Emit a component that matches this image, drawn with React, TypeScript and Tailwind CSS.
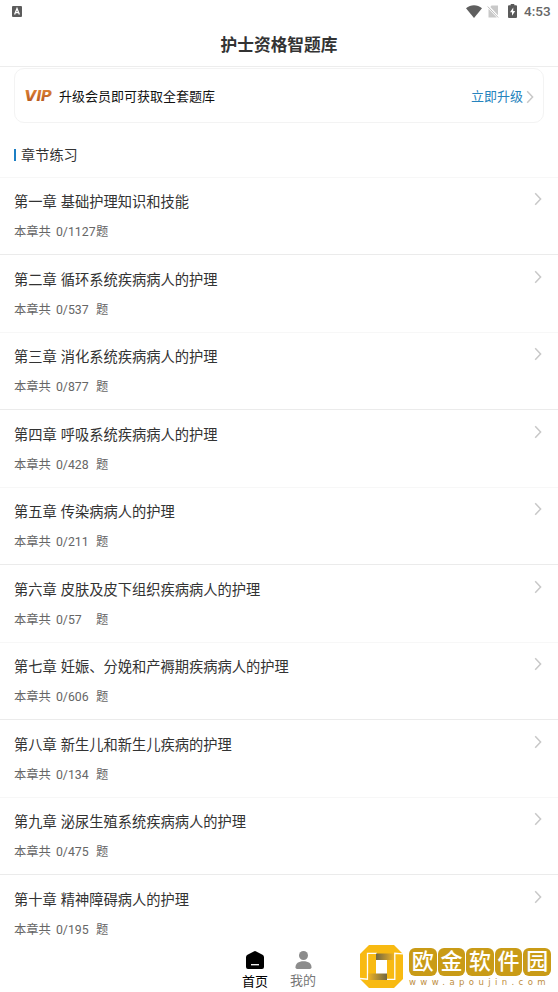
import clsx from 'clsx';

interface Chapter {
  id: number;
  title: string;
  done: number;
  total: number;
}

const chapters: Chapter[] = [
  { id: 1, title: '第一章 基础护理知识和技能', done: 0, total: 1127 },
  { id: 2, title: '第二章 循环系统疾病病人的护理', done: 0, total: 537 },
  { id: 3, title: '第三章 消化系统疾病病人的护理', done: 0, total: 877 },
  { id: 4, title: '第四章 呼吸系统疾病病人的护理', done: 0, total: 428 },
  { id: 5, title: '第五章 传染病病人的护理', done: 0, total: 211 },
  { id: 6, title: '第六章 皮肤及皮下组织疾病病人的护理', done: 0, total: 57 },
  { id: 7, title: '第七章 妊娠、分娩和产褥期疾病病人的护理', done: 0, total: 606 },
  { id: 8, title: '第八章 新生儿和新生儿疾病的护理', done: 0, total: 134 },
  { id: 9, title: '第九章 泌尿生殖系统疾病病人的护理', done: 0, total: 475 },
  { id: 10, title: '第十章 精神障碍病人的护理', done: 0, total: 195 },
];

const Chevron = ({ className }: { className?: string }) => (
  <svg viewBox="0 0 8 14" fill="none" className={clsx('h-3.5 w-2', className)}>
    <path d="M1.2 1.2 6.6 7l-5.4 5.8" stroke="#c8c8c8" strokeWidth="1.5" />
  </svg>
);

const StatusBar = () => (
  <div className="flex h-[22px] items-center justify-between pr-[7px] pl-3">
    <svg viewBox="0 0 10 11" className="h-[11px] w-2.5">
      <rect width="10" height="11" rx="1" fill="#5c5c5c" />
      <path d="M2.6 8.5 5 2.6l2.4 5.9M3.5 6.7h3" stroke="#fff" strokeWidth="1.3" fill="none" />
    </svg>
    <div className="flex items-center">
      <svg viewBox="0 0 16 13" className="h-[13px] w-4">
        <path d="M0 3.2C4.6-.7 11.4-.7 16 3.2L8 13z" fill="#5f5f5f" />
      </svg>
      <svg viewBox="0 0 12 13" className="ml-[5px] h-[13px] w-3">
        <path d="M4.5.5H11v9.8L3.300 2zM1.500 3.800 9.800 12.500H1.500z" fill="#c9c9c9" />
        <path d="m.7 1.500 10.500 11" stroke="#c0c0c0" strokeWidth="1" />
      </svg>
      <svg viewBox="0 0 9 14" className="ml-[9px] h-3.5 w-[9px]">
        <path
          d="M2.700 0h3.600v1.300H8a1 1 0 0 1 1 1V13a1 1 0 0 1-1 1H1a1 1 0 0 1-1-1V2.300a1 1 0 0 1 1-1h1.700z"
          fill="#5a5a5a"
        />
        <path d="M5.300 3.500 2 8.200h2v3.500L7.200 7h-2z" fill="#fff" />
      </svg>
      <span className="mt-px ml-[7px] w-[27px] font-[family-name:Roboto] text-[13.5px] leading-none font-medium text-[#666]">
        4:53
      </span>
    </div>
  </div>
);

const VipCard = () => (
  <div className="mx-3.5 mt-px flex h-[55px] items-center rounded-[10px] border border-[#f3f3f3] pt-0.5 pr-2 pl-[9px]">
    <svg viewBox="0 0 28 18" className="-mt-0.5 h-[18px] w-7 overflow-visible">
      <defs>
        <linearGradient id="vip" x1="0" y1="0" x2="0" y2="1">
          <stop offset="0" stopColor="#e58a3c" />
          <stop offset="1" stopColor="#b0521a" />
        </linearGradient>
      </defs>
      <text
        x="0"
        y="14"
        textLength="27.5"
        lengthAdjust="spacingAndGlyphs"
        fill="url(#vip)"
        className="font-[family-name:Inter] text-[14.5px] font-extrabold italic"
      >
        VIP
      </text>
    </svg>
    <span className="ml-[7px] text-[13px] text-[#111]">升级会员即可获取全套题库</span>
    <span className="ml-auto text-[13px] text-[#2583bd]">立即升级</span>
    <Chevron className="mr-px ml-[3px]" />
  </div>
);

const ChapterRow = ({ chapter }: { chapter: Chapter }) => (
  <li
    className={clsx(
      'flex h-[77.5px] shrink-0 items-start justify-between border-t pr-4 pl-3.5',
      chapter.id % 2 ? 'border-[#f7f7f7]' : 'border-[#ebebeb]',
    )}
  >
    <div className="flex flex-col">
      <span className="mt-[14.5px] text-[14.25px] leading-5 text-[#333]">{chapter.title}</span>
      <span className="mt-[11px] flex text-[12.3px] leading-[18px] text-[#666]">
        本章共
        <span className="ml-[5px] w-10 font-[family-name:Roboto]">
          {chapter.done}/{chapter.total}
        </span>
        题
      </span>
    </div>
    <Chevron className="mt-[14.5px]" />
  </li>
);

const TabBar = () => (
  <nav className="absolute inset-x-0 bottom-0 flex h-12 justify-center gap-[21px] bg-white">
    <div className="flex w-[27px] flex-col items-center text-[13px] whitespace-nowrap text-black">
      <svg viewBox="0 0 18 18" className="mt-[7px] h-[18px] w-[18px]">
        <path d="M7.8.4q1.2-.6 2.400 0l6.300 3.400q1.500.8 1.500 2.400V16q0 2-2 2H2q-2 0-2-2V6.200q0-1.600 1.500-2.400z" />
        <path d="M5 13.700h8" stroke="#fff" strokeWidth="1.3" />
      </svg>
      <span className="mt-1 leading-[18px]">首页</span>
    </div>
    <div className="flex w-[27px] flex-col items-center text-[13px] whitespace-nowrap text-[#777]">
      <svg viewBox="0 0 17 18" className="mt-[7px] h-[18px] w-[17px]" fill="#8c8c8c">
        <circle cx="8.5" cy="4.5" r="4.5" />
        <path d="M.5 16.200C.5 12.500 3.500 10.200 8.500 10.200s8 2.300 8 6q0 1.800-1.600 1.800H2.100Q.5 18 .5 16.200z" />
      </svg>
      <span className="mt-[3px] leading-[18px]">我的</span>
    </div>
  </nav>
);

const SiteMark = () => (
  <div className="absolute right-[7px] bottom-1 flex items-end gap-1.5">
    <svg viewBox="0 0 43 43" className="h-[43px] w-[43px]">
      <defs>
        <linearGradient id="foldTop" x1="0" y1="0" x2="1" y2="0">
          <stop offset="0" stopColor="#6f6644" />
          <stop offset="1" stopColor="#eeb223" />
        </linearGradient>
        <linearGradient id="foldBottom" x1="0" y1="0" x2="1" y2="0">
          <stop offset="0" stopColor="#eeb223" />
          <stop offset="1" stopColor="#6f6644" />
        </linearGradient>
      </defs>
      <path d="M9 0h25l9 9v25l-9 9H9l-9-9V9z" fill="#f8ba12" />
      <path d="M16 14.500h11V29H16z" fill="#fff" />
      {/* hooks running off the two ends of the ring */}
      <path d="M0 33.500 7.500 34.200V8.300H17M43 8.800 34.800 8.300v26H26" fill="none" stroke="#fff" strokeWidth="1.3" />
      <path d="M16 8.500h18v6.500H16z" fill="url(#foldTop)" />
      <path d="M8.300 28.500H27V35H8.300z" fill="url(#foldBottom)" />
    </svg>
    <div className="flex w-[142px] flex-col">
      <div className="flex gap-px">
        {['欧', '金', '软', '件', '园'].map((char) => (
          <span
            key={char}
            className="flex h-7 w-7 items-center justify-center rounded-[6px] bg-[#c99b17] text-[22px] leading-none font-medium text-white"
          >
            {char}
          </span>
        ))}
      </div>
      <span className="mt-px font-['DejaVu_Sans',sans-serif] text-[8.5px] leading-[11px] tracking-[4.4px] whitespace-nowrap text-[#bd8d3d]">
        www.apoujin.com
      </span>
    </div>
  </div>
);

export default function App() {
  return (
    <div className="relative flex h-[992px] w-[558px] flex-col overflow-hidden bg-white font-['Liberation_Sans','Noto_Sans_CJK_SC',sans-serif]">
      <StatusBar />
      <header className="flex h-[45px] items-center justify-center border-b border-[#ededed] pt-1 text-[16.7px] font-bold text-[#333]">
        护士资格智题库
      </header>
      <VipCard />
      <h2 className="flex h-[54px] items-center pt-3 pl-3.5 text-[14.2px] text-[#333]">
        <span className="-mt-0.5 mr-[5px] h-3 w-0.5 bg-[#1c7fc4]" />
        章节练习
      </h2>
      <ul className="-mt-[0.5px] flex flex-col">
        {chapters.map((chapter) => (
          <ChapterRow key={chapter.id} chapter={chapter} />
        ))}
      </ul>
      <TabBar />
      <SiteMark />
    </div>
  );
}
